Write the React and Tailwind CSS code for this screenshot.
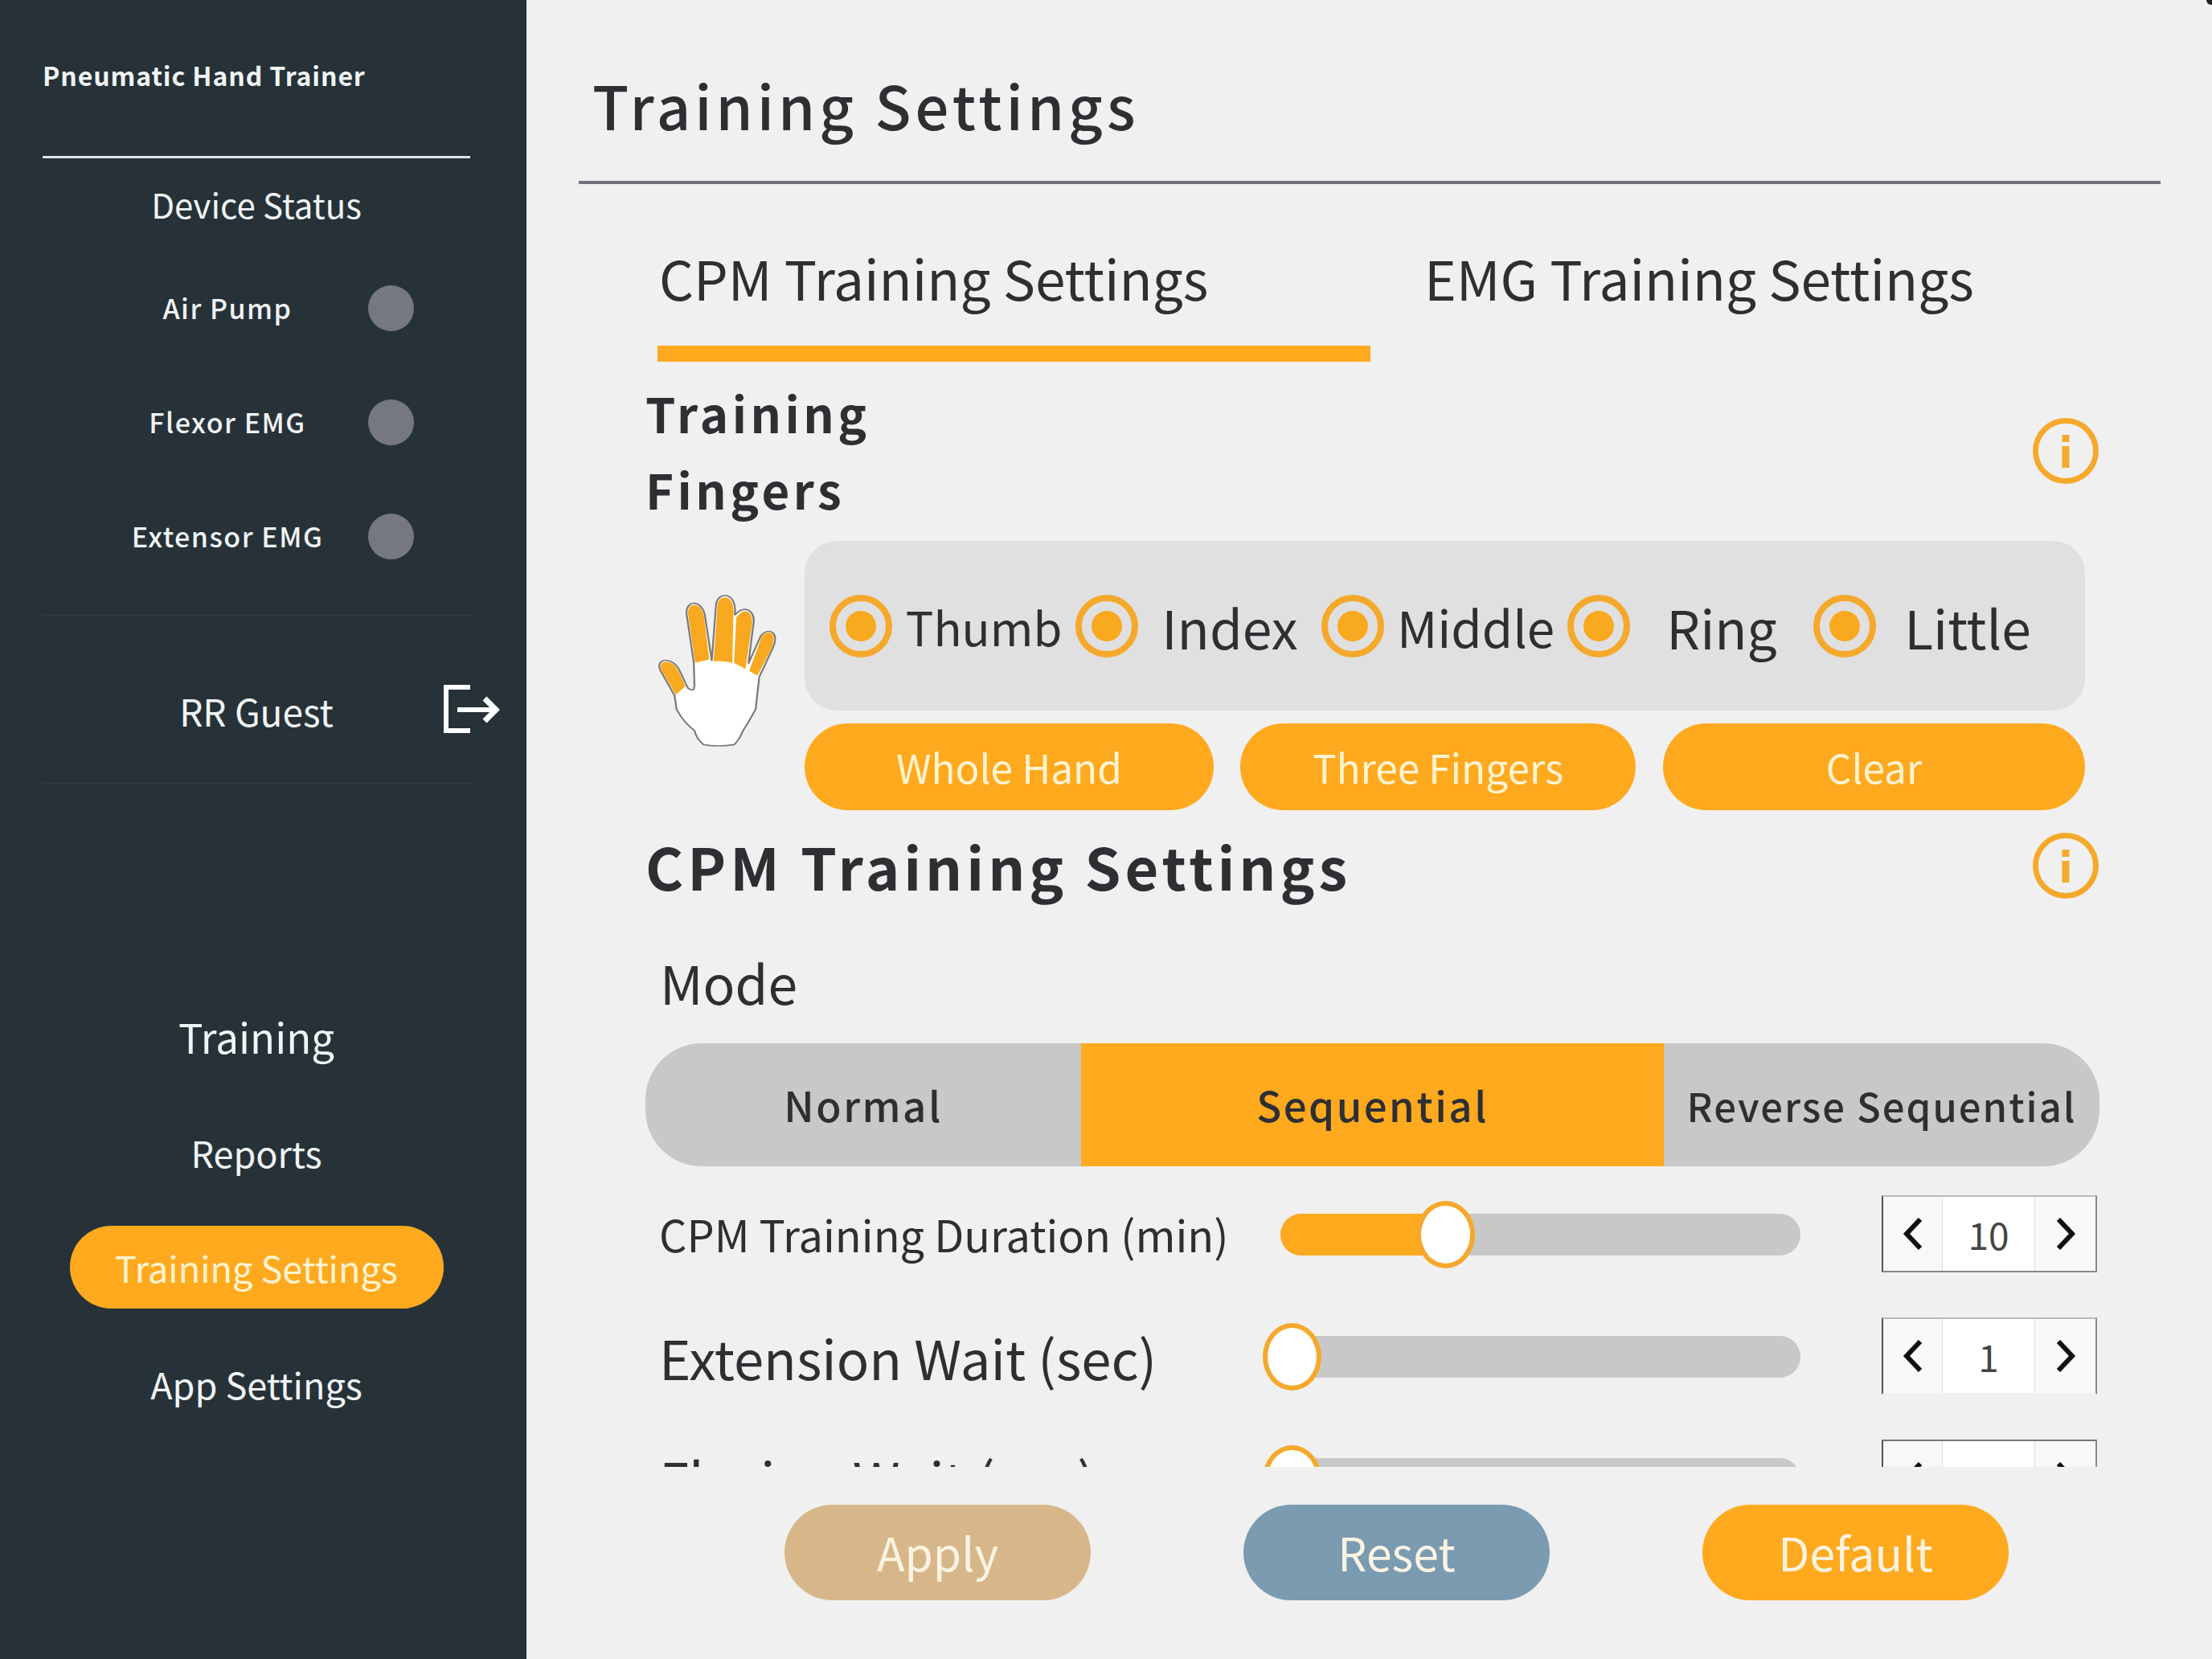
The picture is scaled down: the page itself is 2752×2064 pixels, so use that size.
import React from 'react';

function InfoIcon() {
	return (
		<svg width="84" height="84" viewBox="0 0 84 84" className="block">
			<circle cx="42" cy="42" r="37.5" fill="none" stroke="#f5a92c" strokeWidth="7" />
			<rect x="37.5" y="22" width="9" height="9" fill="#f5a92c" />
			<rect x="37.5" y="36" width="9" height="27" fill="#f5a92c" />
		</svg>
	);
}

function HandIcon() {
	const orange = '#f8a91f';
	return (
		<svg width="150" height="193" viewBox="85 255 335 578" preserveAspectRatio="none" className="block">
			<path
				d="M135 640 L95 545 C80 500 130 490 150 550 L172 612 Q190 630 190 600 L188 515 L168 335 C165 280 215 280 220 350 L238 510 L250 300 C255 250 310 250 302 340 C325 300 365 315 352 390 L340 520 L375 415 C395 385 430 400 405 470 L370 570 L360 690 Q340 740 325 770 Q312 810 300 822 Q255 832 215 822 Q195 800 190 770 Q160 740 140 690 Z"
				fill="#fff"
				stroke="#77797c"
				strokeWidth="5"
			/>
			<path d="M138 636 L98 545 C86 506 128 498 147 552 L165 605 Z" fill={orange} />
			<path d="M192 517 L172 335 C170 288 212 288 217 350 L231 505 Z" fill={orange} />
			<path d="M243 512 L254 300 C259 260 305 260 298 340 L295 518 Q270 508 243 512 Z" fill={orange} />
			<path d="M300 518 L306 350 C325 308 360 320 348 390 L332 540 Z" fill={orange} />
			<path d="M342 548 L378 416 C397 392 424 404 402 470 L365 565 Z" fill={orange} />
		</svg>
	);
}

function LogoutIcon() {
	return (
		<svg width="70" height="60" viewBox="0 0 70 60" fill="none" stroke="#fff" strokeWidth="6" className="block">
			<path d="M33 3 H3 V57 H33" />
			<path d="M17 31 H62" />
			<path d="M51 17 L65 31 L51 45" strokeWidth="7" />
		</svg>
	);
}

function StatusRow({ label }) {
	return (
		<div className="flex items-center h-[142px] pl-[55px]">
			<div className="w-[350px] text-center text-[34px] font-medium tracking-[1.5px] leading-none">{label}</div>
			<div className="w-[57px] h-[57px] rounded-full bg-[#757880]" />
		</div>
	);
}

function Sidebar() {
	return (
		<div className="w-[655px] h-full shrink-0 bg-[#263238] text-[#f1f4f5] px-[53px]">
			<div className="h-[194px] pt-[63px]">
				<div className="text-[32px] font-bold tracking-[0.9px] leading-[60px] whitespace-nowrap">Pneumatic Hand Trainer</div>
			</div>
			<div className="h-[3px] w-[532px] bg-[#dfe4e6]" />
			<div className="text-center text-[42px] leading-[60px] mt-[27px] mb-[-24px] w-[532px]">Device Status</div>
			<div className="pt-[52px]">
				<StatusRow label="Air Pump" />
				<StatusRow label="Flexor EMG" />
				<StatusRow label="Extensor EMG" />
			</div>
			<div className="h-[2px] w-[532px] bg-[#2f3a40] mt-[27px]" />
			<div className="relative h-[207px] w-[532px] flex items-center justify-center pt-[27px] text-[46px]">
				RR Guest
				<div className="absolute left-[499px] top-[85px]"><LogoutIcon /></div>
			</div>
			<div className="h-[2px] w-[532px] bg-[#2f3a40]" />
			<div className="flex flex-col items-center w-[532px] text-[45px]">
				<div className="mt-[263px] h-[100px] leading-[100px] text-[51px]">Training</div>
				<div className="mt-[45px] h-[100px] leading-[100px]">Reports</div>
				<div className="mt-[41px] h-[103px] w-[465px] rounded-full bg-[#ffa91f] text-[#fff4d2] text-center leading-[103px] whitespace-nowrap">Training Settings</div>
				<div className="mt-[44px] h-[100px] leading-[100px] whitespace-nowrap">App Settings</div>
			</div>
		</div>
	);
}

function Radio({ label, size }) {
	return (
		<div className="w-[306px] flex items-center shrink-0">
			<div className="w-[78px] h-[78px] shrink-0 rounded-full border-[8px] border-[#f5a92c] flex items-center justify-center">
				<div className="w-[38px] h-[38px] rounded-full bg-[#f8a91f]" />
			</div>
			<div className={`flex-1 text-center text-[#2d2f33] leading-none ${size}`}>{label}</div>
		</div>
	);
}

function Stepper({ value, tone }) {
	return (
		<div className={`flex w-[268px] h-[96px] shrink-0 border-x-2 border-y-2 border-l-[#555] border-r-[#888] ${tone}`}>
			<div className="w-[74px] bg-[#f8f8f8] flex items-center justify-center border-r border-[#ddd]">
				<svg width="26" height="40" viewBox="0 0 26 40" fill="none" stroke="#111" strokeWidth="6" className="block"><path d="M22 2 L5 20 L22 38" /></svg>
			</div>
			<div className="flex-1 bg-white flex items-center justify-center text-[46px] text-[#444] leading-none">{value}</div>
			<div className="w-[76px] bg-[#f8f8f8] flex items-center justify-center border-l border-[#ddd]">
				<svg width="26" height="40" viewBox="0 0 26 40" fill="none" stroke="#111" strokeWidth="6" className="block"><path d="M4 2 L21 20 L4 38" /></svg>
			</div>
		</div>
	);
}

function SliderRow({ label, size, thumb, value, tone }) {
	return (
		<div className="flex items-center h-[96px] pl-[17px] mb-[56px]">
			<div className={`w-[773px] shrink-0 text-[#2d2f33] leading-none whitespace-nowrap ${size}`}>{label}</div>
			<div className="relative w-[647px] h-[52px] shrink-0 rounded-full bg-[#c8c8c8] mt-[2px]">
				{thumb > 20 && <div className="absolute left-0 top-0 h-full rounded-l-full bg-[#ffa91f]" style={{ width: thumb }} />}
				<div className="absolute top-[-16px] w-[73px] h-[84px] rounded-[50%] bg-white border-[6px] border-[#f5a92c]" style={{ left: thumb - 36 }} />
			</div>
			<div className="ml-[101px]"><Stepper value={value} tone={tone} /></div>
		</div>
	);
}

function BottomButton({ label, color }) {
	return (
		<div className={`w-[381px] h-[119px] rounded-full text-[57px] text-[#fbf3e2] leading-[117px] text-center ${color}`}>{label}</div>
	);
}

export default function App() {
	return (
		<div className="relative flex w-[2752px] h-[2064px] overflow-hidden bg-[#f0f0f0] font-['Noto_Sans_CJK_TC','Noto_Sans',sans-serif]">
			<Sidebar />
			<div className="flex-1 min-w-0">
				<div className="ml-[65px] w-[1968px] h-[229px] border-b-4 border-[#6f7278] pt-[80px] pl-[17px]">
					<div className="text-[74px] font-medium tracking-[5px] leading-[100px] text-[#2d2f33]">Training Settings</div>
				</div>

				<div className="ml-[163px] flex h-[221px] pt-[66px] text-[67.5px] text-[#2d2f33] leading-[100px]">
					<div className="w-[887px]">
						<div className="h-[135px] pl-[2px] whitespace-nowrap">CPM Training Settings</div>
						<div className="h-[20px] bg-[#ffa91f]" />
					</div>
					<div className="ml-[67px] whitespace-nowrap">EMG Training Settings</div>
				</div>

				<div className="ml-[148px] w-[1809px] h-[1375px] overflow-hidden">
					<div className="relative pt-[15px] h-[223px]">
						<div className="text-[60px] font-bold tracking-[4.5px] leading-[95px] text-[#2d2f33]">Training<br />Fingers</div>
						<div className="absolute left-[1725px] top-[69px]"><InfoIcon /></div>
					</div>

					<div className="flex">
						<div className="w-[198px] pl-[14px] pt-[64px] shrink-0"><HandIcon /></div>
						<div className="w-[1593px]">
							<div className="h-[211px] rounded-[40px] bg-[#e0e0e0] flex items-center pl-[31px] overflow-hidden">
								<Radio label="Thumb" size="text-[58px]" />
								<Radio label="Index" size="text-[66px]" />
								<Radio label="Middle" size="text-[62px]" />
								<Radio label="Ring" size="text-[66px]" />
								<Radio label="Little" size="text-[66px]" />
							</div>
							<div className="flex mt-[16px] text-[49.5px] text-[#fff4d2] text-center leading-[108px]">
								<div className="w-[509px] h-[108px] rounded-full bg-[#ffa91f]">Whole Hand</div>
								<div className="ml-[33px] w-[492px] h-[108px] rounded-full bg-[#ffa91f]">Three Fingers</div>
								<div className="ml-[34px] w-[525px] h-[108px] rounded-full bg-[#ffa91f]">Clear</div>
							</div>
						</div>
					</div>

					<div className="relative mt-[19px] h-[100px]">
						<div className="text-[72px] font-bold tracking-[5px] leading-[100px] text-[#2d2f33] whitespace-nowrap">CPM Training Settings</div>
						<div className="absolute left-[1725px] top-[8px]"><InfoIcon /></div>
					</div>

					<div className="mt-[54px] pl-[18px] text-[66px] leading-[80px] text-[#2d2f33]">Mode</div>

					<div className="mt-[37px] flex h-[153px] rounded-[70px] overflow-hidden bg-[#c8c8c8] text-[51px] font-medium tracking-[2.5px] text-[#2d2f33] leading-[153px] text-center">
						<div className="w-[542px]">Normal</div>
						<div className="w-[725px] bg-[#ffa91f]">Sequential</div>
						<div className="w-[542px] whitespace-nowrap text-[49px] tracking-[2px]">Reverse Sequential</div>
					</div>

					<div className="pt-[36px]">
						<SliderRow label="CPM Training Duration (min)" size="text-[54px]" thumb={205} value="10" tone="border-t-[#bbb] border-b-[#888]" />
						<SliderRow label="Extension Wait (sec)" size="text-[67px]" thumb={14} value="1" tone="border-t-[#bbb] border-b-transparent" />
						<SliderRow label="Flexion Wait (sec)" size="text-[67px]" thumb={14} value="1" tone="border-t-[#777] border-b-transparent" />
					</div>
				</div>

				<div className="mt-[47px] ml-[321px] flex gap-[190px]">
					<BottomButton label="Apply" color="bg-[#d7b78a]" />
					<BottomButton label="Reset" color="bg-[#7a9bb0]" />
					<BottomButton label="Default" color="bg-[#ffa91f]" />
				</div>
			</div>
			<div className="absolute top-0 right-0 w-[7px] h-[6px] rounded-bl-full bg-[#222]" />
		</div>
	);
}
